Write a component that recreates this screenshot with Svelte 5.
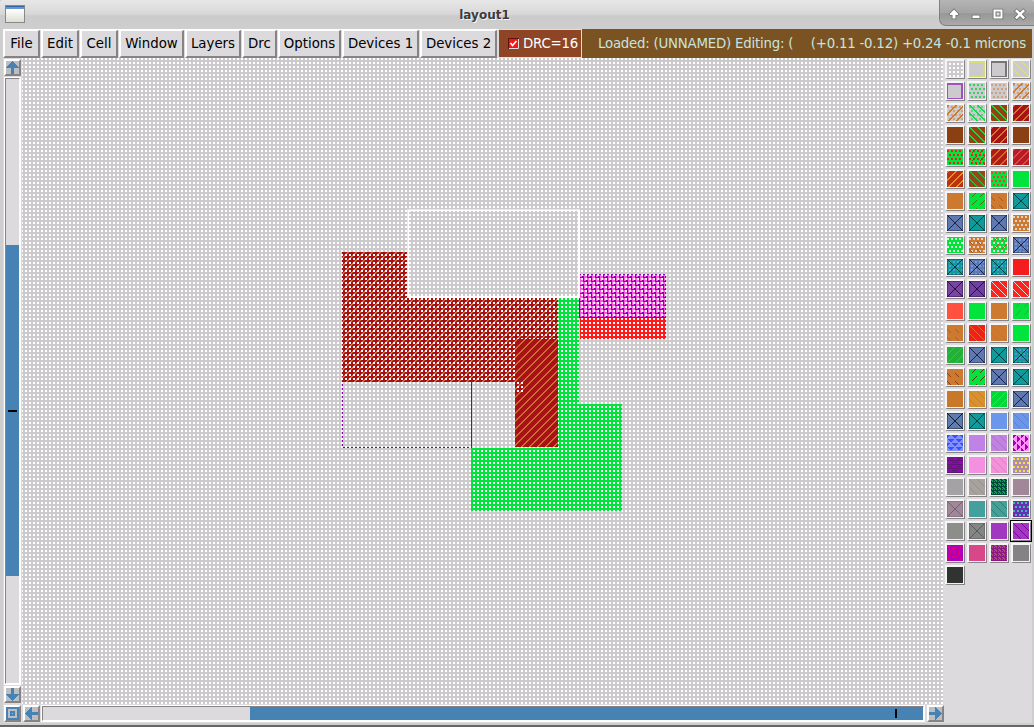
<script>
  const menus = [['File', 37], ['Edit', 38], ['Cell', 38], ['Window', 65], ['Layers', 56], ['Drc', 35], ['Options', 63], ['Devices 1', 77], ['Devices 2', 77]];

  const G = '#00e43c', O = '#cd7a30', T = '#109a9a', B = '#6078b0', L = '#cdcacd', R = '#f41c1c', D = '#a81216', N = '#8a4012';
  // fill colour followed by overlay kind and overlay colour pairs
  const layers = [
    [L, 'grid', '#fff'], [L, 'edge', '#d8dc78'], [L, 'edge', '#777'], [L, 'back', '#dce088'],
    [L, 'edge', '#a050c0'], [L, 'dots', '#28d860'], [L, 'dots', '#d0a078'], [L, 'dots', '#d0a078', 'slash2', '#d07828'],
    [L, 'dots', '#d0a078', 'slash2', '#d07828'], [L, 'dots', '#58d880', 'back2', '#10dc48'], ['#944010', 'back2', '#10dc48'], [D, 'slash2', O],
    [N], ['#944010', 'back2', '#10dc48'], [D, 'slash2', O], [N],
    [G, 'dots', '#f02020'], [G, 'dots', '#f02020', 'dash', '#904010'], ['#b01a18', 'slash2', '#d07020'], ['#b81a2c', 'slash2', '#d85030'],
    ['#bc3014', 'slash2', '#e09020'], ['#944818', 'back2', '#10c040'], [G, 'dots', '#f04030'], [G],
    [O], [G, 'dash', '#507010'], [O, 'bdash', '#a85818'], [T, 'cross', '#053c40'],
    [B, 'cross', '#182448'], [T, 'cross', '#053c40'], [B, 'cross', '#182448'], [O, 'dots', '#ddd4d0'],
    [G, 'dots', '#d8ecd8'], [O, 'dots', '#ddd4d0', 'bdash', '#a85818'], [G, 'dots', '#d8ecd8', 'dash', '#a06020'], [B, 'grid', '#6898f0', 'cross', '#182448'],
    [T, 'grid', '#5898e8', 'cross', '#053c40'], [B, 'grid', '#6898f0', 'cross', '#182448'], [T, 'grid', '#5898e8', 'cross', '#053c40'], [R],
    ['#7846a0', 'cross', '#280c48'], ['#7040a0', 'cross', '#280c48'], ['#fc241c', 'back', '#ddd'], ['#fc241c', 'back', '#ddd'],
    ['#ff5040'], [G], [O], [G, 'dash', '#18b830'],
    [O, 'bdash', '#b06020'], [R, 'back', '#d87020'], [O, 'back', '#c8722a'], [G],
    ['#22b036', 'slash', '#18dc40'], [B, 'cross', '#182448'], [T, 'cross', '#053c40'], [T, 'grid', '#7080e0', 'cross', '#053c40'],
    [O, 'bdash', '#804010'], [G, 'dash', '#504010'], [B, 'cross', '#182448'], [T, 'cross', '#053c40'],
    ['#c87828'], ['#d89030', 'back', '#c8801c'], ['#00d838', 'slash', '#20f050'], [B, 'cross', '#182448'],
    ['#607cac', 'cross', '#101c30'], [T, 'cross', '#053c40'], ['#6a96ec'], ['#6a96ec', 'back', '#6080cc'],
    ['#3c50ff', 'tri', '#8090ff'], ['#c082e4'], ['#c082e4', 'back', '#b070c0'], ['#a000b8', 'tri2', '#ff90f8'],
    ['#9800c0', 'rows', '#5c1870'], ['#f490e0'], ['#f490e0', 'back', '#e080b0'], ['#b08cb0', 'dots', '#f4e43c'],
    ['#a4a2a4'], ['#a4a2a4', 'back', '#a09078'], ['#004838', 'maze', '#10a060'], ['#a08898'],
    ['#a08898', 'cross', '#706070'], ['#44a09c'], ['#44a09c', 'back', '#308068'], ['#6830b0', 'dots', '#40b8b8'],
    ['#8c8e8a'], ['#848684', 'cross', '#585c5c'], ['#a038c0'], ['#a038c0', 'back', '#8000a0'],
    ['#b000b8', 'ring', '#d80080'], ['#d84888'], ['#8c1888', 'maze', '#a85070'], ['#848284'],
    ['#303430']
  ];

  const box = (x, y, w = 1, h = 1) => `M${x} ${y}h${w}v${h}h${-w}z`;
  function art(kind) {
    let s = '';
    if (kind === 'edge') return 'M0 0H16V16H0ZM1 2V15H14V2Z';
    if (kind === 'cross') {
      for (let i = 0; i < 16; i++) s += box(i, i) + box(15 - i, i);
      return s;
    }
    if (kind === 'ring') return box(5, 2, 5, 2) + box(2, 5, 2, 5) + box(11, 5, 2, 5) + box(5, 11, 5, 2) + box(6, 6, 3, 3) + box(1, 1, 2, 2) + box(13, 1, 2, 2) + box(1, 13, 2, 2) + box(13, 13, 2, 2);
    if (kind === 'rows') return box(0, 3, 16, 1) + box(0, 7, 16, 1) + box(0, 11, 16, 1) + box(0, 15, 16, 1) + box(2, 1, 4, 1) + box(10, 1, 4, 1) + box(5, 5, 6, 1) + box(1, 9, 4, 1) + box(10, 9, 4, 1) + box(5, 13, 6, 1);
    for (let y = 0; y < 16; y++) for (let x = 0; x < 16; x++) {
      const hit = {
        grid: (x + 2) % 4 < 2 && (y + 2) % 4 < 2 && x > 1 && y > 1,
        dots: ((y + 3) % 4 < 2) && ((x + (((y + 3) & 4) ? 2 : 0) + 2) % 4 < 2),
        slash: (x + y + 1) % 8 === 0,
        slash2: (x + y) % 8 < 2,
        back: (x - y + 24) % 8 === 0,
        back2: (x - y + 24) % 8 < 2,
        dash: (x + y + 2) % 8 === 0 && x % 8 > 2,
        bdash: (x - y + 20) % 8 === 0 && x % 8 < 4,
        tri: Math.abs(((x + (y & 4 ? 4 : 0)) % 8) - 3.5) < (y % 4) + 0.8,
        tri2: Math.abs(((y + (x & 4 ? 4 : 0)) % 8) - 3.5) < (x % 4) + 0.8,
        maze: (x * 3 + y * 5 + (x & y)) % 4 < 2
      }[kind];
      if (hit) s += box(x, y);
    }
    return s;
  }
  const arts = {};
  for (const k of ['edge', 'cross', 'ring', 'rows', 'grid', 'dots', 'slash', 'slash2', 'back', 'back2', 'dash', 'bdash', 'tri', 'tri2', 'maze']) arts[k] = art(k);
  let diag = '';
  for (let i = 0; i < 8; i++) diag += box(i, 7 - i) + box((i + 1) % 8, 7 - i);
</script>

{#snippet arrow(turn)}
  <span class="btn"><svg width="13" height="13" viewBox="0 0 13 13" shape-rendering="crispEdges"><path fill="#4682b4" transform={`rotate(${turn} 6.5 6.5)`} d="M6 0h1v1h1v1h1v1h1v1h1v1h1v1h1v1H8v6H5V7H0V6h1V5h1V4h1V3h1V2h1V1h1z" /></svg></span>
{/snippet}

<div class="window">
  <header>
    <div class="appicon"></div>
    <div class="title">layout1</div>
    <div class="controls">
      <svg width="95" height="27" viewBox="0 0 95 27">
        <g fill="#fff" stroke="#707070" stroke-width="1.6" paint-order="stroke">
          <path d="M15 9.500l4.500 4.500-1 1h-2v3.500h-3V15h-2l-1-1z" />
          <path d="M33.500 15.500h7v2.500h-7z" />
          <path fill-rule="evenodd" d="M54.500 9.500h9v9h-9zM56.500 11.500v5h5v-5z" />
          <path d="M57.500 12.500h3v3h-3z" fill="#ddd" stroke-width="1" />
          <path d="M76 11l1.700-1.700 3.300 3.300 3.300-3.300L86 11l-3.300 3.300 3.300 3.300-1.700 1.700-3.300-3.300-3.300 3.300-1.700-1.700 3.300-3.300z" />
        </g>
      </svg>
    </div>
  </header>

  <nav>
    {#each menus as [name, width]}
      <button style:width={`${width}px`}>{name}</button>
    {/each}
    <div class="drc">
      <svg width="11" height="11" viewBox="0 0 11 11"><path fill="#f81414" stroke="#601010" d="M.5.5h10v10H.5z" /><path d="M1 10.500h9.500V1" fill="none" stroke="#ddd" /><path d="M2.500 5l2 2.500L8.500 3" fill="none" stroke="#fff" stroke-width="1.700" /></svg>
      <span>DRC=16</span>
    </div>
    <div class="status"><span>Loaded: (UNNAMED) Editing: (</span><span>(+0.11 -0.12) +0.24 -0.1 microns</span></div>
  </nav>

  <main>
    <div class="vbar">
      {@render arrow(0)}
      <div class="track"><div class="thumb"><i></i></div></div>
      {@render arrow(180)}
    </div>
    <svg class="drawing" width="921" height="646" viewBox="22 58 921 646" shape-rendering="crispEdges">
      <defs>
        <pattern id="points" width="4" height="4" patternUnits="userSpaceOnUse"><path fill="#fff" d="M1 2h2v2H1z" /></pattern>
        <pattern id="hatch" width="8" height="8" patternUnits="userSpaceOnUse"><path fill="#a81216" d="M0 0h8v8H0z" /><path fill="#c8702c" d={diag} /></pattern>
        <pattern id="wedge" width="8" height="8" patternUnits="userSpaceOnUse">
          <path fill="#f45cdc" d="M0 0h8v8H0z" />
          <path fill="#8c00b8" d="M3 0h1v6H3zM2 0h1v3H2zM1 1h1v1H1zM7 4h1v4H7zM6 4h1v3H6zM5 5h1v1H5zM7 0h1v2H7zM0 1h1v1H0zM4 5h1v1H4z" />
        </pattern>
      </defs>
      <path fill="#cdcacd" d="M22 58h921v646H22z" />
      <path fill="url(#hatch)" d="M342 252h66v46h150v84H342z" />
      <path fill="#00e43c" d="M558 298h21v106h43v107H471v-63h87z" />
      <path fill="url(#wedge)" d="M580 274h86v44h-86z" />
      <path fill="#8c00b8" d="M580 317h86v1h-86zM579 297h1v21h-1zM665 274h1v44h-1zM580 274h86v1h-86z" />
      <path fill="#fc1c1c" d="M580 318h86v21h-86z" />
      <path fill="#8000b0" d="M342 382h1v66h-1zM342 447h130v1H342zM471 382h1v66h-1z" />
      <path fill="url(#points)" d="M22 58h921v646H22z" />
      <path fill="url(#hatch)" d="M515 339h43v108h-43z" />
      <path fill="url(#points)" d="M515 382h10v10h-10z" />
      <path fill="#e9e7e9" d="M407 209h173v1H408v88h-1z" />
      <path fill="#fff" fill-rule="evenodd" d="M408 210h172v88H408zM409 211v85h169v-85z" />
    </svg>
    <aside>
      {#each layers as [fill, ...marks], n}
        <div class="cell" class:selected={n === 87}>
          <svg width="16" height="16" shape-rendering="crispEdges">
            <rect width="16" height="16" {fill} />
            {#each marks as mark, i}
              {#if i % 2 === 0}
                {#if mark === 'cross'}<rect x=".5" y=".5" width="15" height="15" fill="none" stroke={marks[i + 1]} stroke-opacity=".45" />{/if}
                <path d={arts[mark]} fill={marks[i + 1]} fill-rule="evenodd" />
              {/if}
            {/each}
          </svg>
        </div>
      {/each}
    </aside>
  </main>

  <footer>
    <span class="btn"><svg width="13" height="13" shape-rendering="crispEdges"><path fill="#4682b4" fill-rule="evenodd" d="M0 0h13v13H0zM2 2v9h9V2zM4 4h5v5H4zM6 6v1h1V6z" /></svg></span>
    {@render arrow(270)}
    <div class="track"><div class="thumb"><i></i></div></div>
    {@render arrow(90)}
  </footer>
</div>

<style>
  :global(body) { margin: 0; overflow: hidden; }
  .window { box-sizing: border-box; width: 1034px; height: 727px; background: #dcdadd; border: solid #cecece; border-width: 0 2px 4px 3px; font: 13.33px "DejaVu Sans", sans-serif; display: flex; flex-direction: column; background-clip: padding-box; position: relative; }
  .window::after { content: ''; position: absolute; left: -3px; right: -2px; bottom: -4px; height: 2px; background: #666; }
  header { height: 29px; flex: none; margin: 0 -2px 0 -3px; display: grid; grid-template-columns: 95px 1fr 95px; background: linear-gradient(#e8e7e8, #d8d8d8 48%, #cbcbcb 55%, #cecece); border-radius: 3px 3px 0 0; }
  .appicon { width: 18px; height: 16px; margin: 5px 0 0 5px; border: 1px solid #888; box-sizing: content-box; background: linear-gradient(#3465a4 0 1px, #6a94ce 1px 3px, #fff 3px, #deded6); }
  .title { text-align: center; font-weight: bold; font-size: 12px; line-height: 30px; height: 29px; color: #3c3c3c; text-shadow: 1px 1px #f3f3f3; padding-right: 65px; }
  .controls { height: 26px; border: solid #808080; border-width: 0 0 1px 1px; box-sizing: border-box; border-radius: 0 3px 0 7px; background: linear-gradient(#b4b4b4, #a4a4a4 50%, #989898 55%, #a9a9a9); }
  .controls svg { display: block; margin-left: -1px; }
  nav { height: 29px; flex: none; display: flex; gap: 1px; border-top: 1px solid #fff; box-sizing: border-box; }
  button { flex: none; box-sizing: border-box; height: 28px; padding: 0 0 1px; margin: 0; background: #dcdadd; border: 2px solid; border-color: #fff #858385 #858385 #fff; border-top-width: 1px; font: inherit; color: #000; white-space: nowrap; display: flex; align-items: center; justify-content: center; }
  .drc { width: 84px; flex: none; box-sizing: border-box; margin-top: -1px; border: 1px solid #ddd; background: #8e4526; color: #fff; display: flex; align-items: center; gap: 4px; padding-left: 9px; white-space: nowrap; letter-spacing: -.2px; }
  .status { flex: 1; margin: -1px 0 0 -1px; background: #7b5222; color: #c8e4de; display: flex; justify-content: space-between; align-items: center; padding: 0 6px 0 16px; white-space: pre; letter-spacing: -.22px; }
  main { height: 646px; flex: none; display: flex; }
  .vbar { width: 19px; flex: none; display: flex; flex-direction: column; align-items: center; gap: 2px; padding: 1px 0; box-sizing: border-box; }
  .btn { box-sizing: border-box; flex: none; width: 17px; height: 17px; background: #bebebe; border: 2px solid; border-color: #fff #858385 #858385 #fff; }
  .btn svg { display: block; }
  .track { box-sizing: border-box; flex: 1; border: 1px solid; border-color: #858385 #fff #fff #858385; outline: 1px solid #fff; background: #dcdadd; }
  .vbar .track { width: 15px; padding-top: 166px; }
  .thumb { background: #4682b4; display: flex; align-items: center; justify-content: center; }
  .vbar .thumb { height: 331px; }
  i { display: block; background: #000; width: 9px; height: 2px; }
  .drawing { display: block; flex: none; }
  aside { display: grid; grid-template-columns: repeat(4, 20px); grid-auto-rows: 20px; gap: 2px; padding: 1px 0 0 2px; align-content: start; flex: 1; }
  .cell { box-sizing: border-box; background: #f2f1f2; border: solid; border-width: 2px 1px 1px 2px; border-color: #f6f5f6 #858385 #858385 #f6f5f6; width: 20px; height: 20px; }
  .cell svg { display: block; }
  .selected { outline: 1px solid #000; }
  footer { height: 19px; flex: none; box-sizing: border-box; display: flex; align-items: center; gap: 2px; padding: 0 90px 0 1px; }
  footer .track { height: 15px; padding-left: 207px; margin: 0 1px 0 0; }
  footer .thumb { height: 13px; width: 673px; justify-content: flex-end; }
  footer i { width: 2px; height: 9px; margin-right: 26px; }
</style>
